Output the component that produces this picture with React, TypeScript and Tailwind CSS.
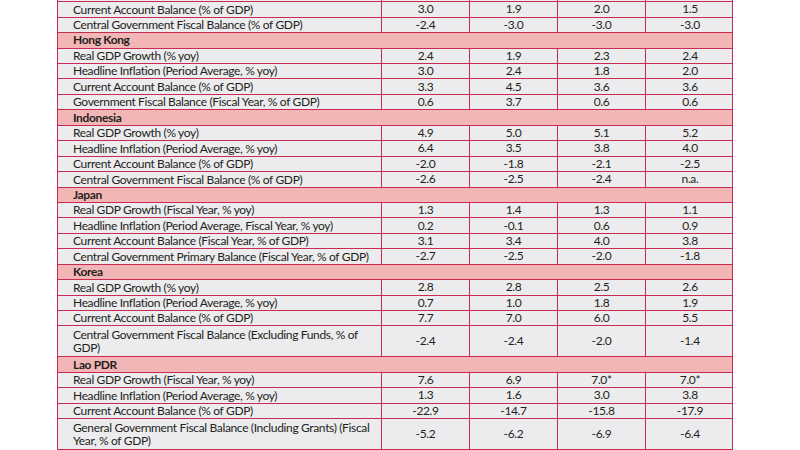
type Row =
  | { kind: 'head'; label: string }
  | { kind: 'data'; label: React.ReactNode; values: string[]; tall?: boolean };

const rows: Row[] = [
  { kind: 'data', label: 'Headline Inflation (Period Average, % yoy)', values: ['2.1', '2.0', '2.2', '2.4'] },
  { kind: 'data', label: 'Current Account Balance (% of GDP)', values: ['3.0', '1.9', '2.0', '1.5'] },
  { kind: 'data', label: 'Central Government Fiscal Balance (% of GDP)', values: ['-2.4', '-3.0', '-3.0', '-3.0'] },
  { kind: 'head', label: 'Hong Kong' },
  { kind: 'data', label: 'Real GDP Growth (% yoy)', values: ['2.4', '1.9', '2.3', '2.4'] },
  { kind: 'data', label: 'Headline Inflation (Period Average, % yoy)', values: ['3.0', '2.4', '1.8', '2.0'] },
  { kind: 'data', label: 'Current Account Balance (% of GDP)', values: ['3.3', '4.5', '3.6', '3.6'] },
  { kind: 'data', label: 'Government Fiscal Balance (Fiscal Year, % of GDP)', values: ['0.6', '3.7', '0.6', '0.6'] },
  { kind: 'head', label: 'Indonesia' },
  { kind: 'data', label: 'Real GDP Growth (% yoy)', values: ['4.9', '5.0', '5.1', '5.2'] },
  { kind: 'data', label: 'Headline Inflation (Period Average, % yoy)', values: ['6.4', '3.5', '3.8', '4.0'] },
  { kind: 'data', label: 'Current Account Balance (% of GDP)', values: ['-2.0', '-1.8', '-2.1', '-2.5'] },
  { kind: 'data', label: 'Central Government Fiscal Balance (% of GDP)', values: ['-2.6', '-2.5', '-2.4', 'n.a.'] },
  { kind: 'head', label: 'Japan' },
  { kind: 'data', label: 'Real GDP Growth (Fiscal Year, % yoy)', values: ['1.3', '1.4', '1.3', '1.1'] },
  { kind: 'data', label: 'Headline Inflation (Period Average, Fiscal Year, % yoy)', values: ['0.2', '-0.1', '0.6', '0.9'] },
  { kind: 'data', label: 'Current Account Balance (Fiscal Year, % of GDP)', values: ['3.1', '3.4', '4.0', '3.8'] },
  { kind: 'data', label: 'Central Government Primary Balance (Fiscal Year, % of GDP)', values: ['-2.7', '-2.5', '-2.0', '-1.8'] },
  { kind: 'head', label: 'Korea' },
  { kind: 'data', label: 'Real GDP Growth (% yoy)', values: ['2.8', '2.8', '2.5', '2.6'] },
  { kind: 'data', label: 'Headline Inflation (Period Average, % yoy)', values: ['0.7', '1.0', '1.8', '1.9'] },
  { kind: 'data', label: 'Current Account Balance (% of GDP)', values: ['7.7', '7.0', '6.0', '5.5'] },
  {
    kind: 'data',
    tall: true,
    label: (
      <>
        Central Government Fiscal Balance (Excluding Funds, % of
        <br />
        GDP)
      </>
    ),
    values: ['-2.4', '-2.4', '-2.0', '-1.4'],
  },
  { kind: 'head', label: 'Lao PDR' },
  { kind: 'data', label: 'Real GDP Growth (Fiscal Year, % yoy)', values: ['7.6', '6.9', '7.0*', '7.0*'] },
  { kind: 'data', label: 'Headline Inflation (Period Average, % yoy)', values: ['1.3', '1.6', '3.0', '3.8'] },
  { kind: 'data', label: 'Current Account Balance (% of GDP)', values: ['-22.9', '-14.7', '-15.8', '-17.9'] },
  {
    kind: 'data',
    tall: true,
    label: (
      <>
        General Government Fiscal Balance (Including Grants) (Fiscal
        <br />
        Year, % of GDP)
      </>
    ),
    values: ['-5.2', '-6.2', '-6.9', '-6.4'],
  },
];

export default function App() {
  return (
    <div
      className="w-[800px] h-[450px] overflow-hidden bg-white text-[12px] tracking-[-0.35px] text-[#231f20]"
      style={{ fontFamily: 'Lato, "Open Sans", sans-serif' }}
    >
      <div className="ml-[57px] mt-[-13.2px] w-[676px] border-l border-r border-[#c92b53]">
        {rows.map((row, i) =>
          row.kind === 'head' ? (
            <div
              key={i}
              className="h-[15.45px] flex items-center pl-[15px] bg-[#f2b6b6] border-b border-[#c92b53] font-bold whitespace-nowrap"
            >
              {row.label}
            </div>
          ) : (
            <div
              key={i}
              className={`flex bg-[#ececee] border-b border-[#c92b53] ${row.tall ? 'h-[30.9px]' : 'h-[15.45px]'}`}
            >
              <div className="w-[324px] shrink-0 flex items-center pl-[15px] leading-[13.5px] whitespace-nowrap border-r border-[#c92b53]">
                <span>{row.label}</span>
              </div>
              {row.values.map((v, j) => (
                <div
                  key={j}
                  className={`w-[88px] shrink-0 flex items-center justify-center ${j < 3 ? 'border-r border-[#c92b53]' : ''}`}
                >
                  {v}
                </div>
              ))}
            </div>
          ),
        )}
      </div>
    </div>
  );
}
